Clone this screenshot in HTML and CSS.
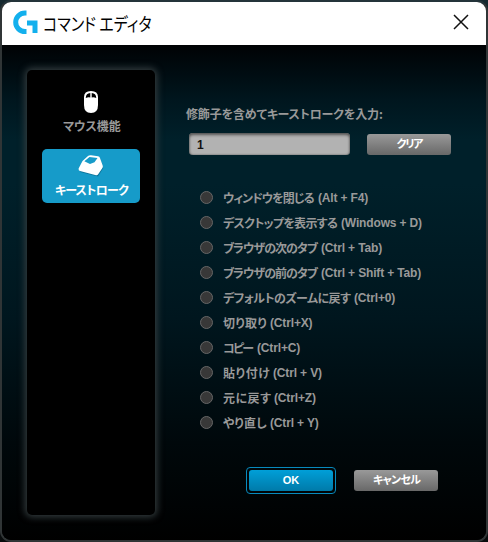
FILE: index.html
```html
<!DOCTYPE html>
<html lang="ja">
<head>
<meta charset="utf-8">
<title>コマンド エディタ</title>
<link rel="stylesheet" href="styles.css">
</head>
<body>
<div class="window">
  <header class="titlebar">
    <svg class="logo" width="25" height="25" viewBox="0 0 25 25"><path d="M13.500 3H12a9.300 9.300 0 0 0 0 18.600h1.500" fill="none" stroke="#13b0ed" stroke-width="5"/><path d="M14 10.500h10.500V23h-5v-7.500H14z" fill="#13b0ed"/></svg>
    <h1>コマンド エディタ</h1>
    <svg class="close" width="16" height="16" viewBox="0 0 16 16"><path d="M1 1l14 14M15 1L1 15" stroke="#111" stroke-width="1.5"/></svg>
  </header>
  <main class="body">
    <nav class="sidebar">
      <div class="tab">
        <svg width="16" height="24" viewBox="0 0 16 24"><path d="M1 7Q1 1 8 1t7 6v8q0 8-7 8t-7-8z" fill="#fff"/><path d="M2.800 7.500Q3 3.300 7.300 2.900V7.500Q5 7 2.800 8zM8.700 2.900q4.300.4 4.500 4.600v.5Q11 7 8.700 7.500z" fill="#000"/></svg>
        <span class="jp" style="width:56px">マウス機能</span>
      </div>
      <div class="tab active">
        <svg width="26" height="22" viewBox="0 0 26 22"><path d="M8 3L22 3l3.300 10-5.300 8.500L2 17z" fill="#075a7c" opacity=".6"/><path d="M4.500 6L10 1Q11 0 13 .2L20 1.300Q21.500 1.500 22 3l2.700 7.500q.5 1.500-.3 2.500L20 19.500q-.6 1-2 .7L2 16Q.3 15.500.6 13.500z" fill="#fff"/><path d="M6.300 6.300L11.500 2 19.500 3 16.500 7.200 12 9z" fill="#169bc9"/></svg>
        <span class="jp" style="width:72px">キーストローク</span>
      </div>
    </nav>
    <section class="content">
      <label class="prompt"><span class="jp" style="width:195px">修飾子を含めてキーストロークを入力:</span></label>
      <div class="entry"><div class="input">1</div><button><span class="jp" style="width:25px">クリア</span></button></div>
      <ul class="options">
        <li><i></i><span class="jp" style="width:90px">ウィンドウを閉じる</span><span>(Alt + F4)</span></li>
        <li><i></i><span class="jp" style="width:113px">デスクトップを表示する</span><span>(Windows + D)</span></li>
        <li><i></i><span class="jp" style="width:93px">ブラウザの次のタブ</span><span>(Ctrl + Tab)</span></li>
        <li><i></i><span class="jp" style="width:93px">ブラウザの前のタブ</span><span>(Ctrl + Shift + Tab)</span></li>
        <li><i></i><span class="jp" style="width:126px">デフォルトのズームに戻す</span><span>(Ctrl+0)</span></li>
        <li><i></i><span class="jp" style="width:42px">切り取り</span><span>(Ctrl+X)</span></li>
        <li><i></i><span class="jp" style="width:29px">コピー</span><span>(Ctrl+C)</span></li>
        <li><i></i><span class="jp" style="width:45px">貼り付け</span><span>(Ctrl + V)</span></li>
        <li><i></i><span class="jp" style="width:46px">元に戻す</span><span>(Ctrl+Z)</span></li>
        <li><i></i><span class="jp" style="width:42px">やり直し</span><span>(Ctrl + Y)</span></li>
      </ul>
      <div class="actions"><div class="focus"><button class="primary">OK</button></div><button><span class="jp" style="width:46px">キャンセル</span></button></div>
    </section>
  </main>
</div>
</body>
</html>
```
FILE: styles.css
```css
* { box-sizing: border-box; }
body {
  margin: 0;
  width: 488px;
  height: 542px;
  overflow: hidden;
  background: linear-gradient(#15282f, #303637 50%, #080b0c);
  font: bold 12px/16px "Liberation Sans", "Noto Sans CJK JP", sans-serif;
  color: #999;
}
.window {
  width: 488px;
  height: 542px;
  border: 2px solid #303536;
  border-top-color: #24343a;
  border-radius: 11px;
  overflow: hidden;
  background: #000;
}
.titlebar {
  display: flex;
  align-items: center;
  height: 43px;
  padding: 0 17px 2px 11px;
  background: #fff;
}
.logo { flex: none; }
.close { margin-top: -1px; }
h1 {
  flex: 1;
  margin: 0 0 0 5px;
  font: 400 18px/24px "Noto Sans CJK JP", sans-serif;
  font-feature-settings: "palt";
  color: #000;
  transform: scaleX(.835);
  transform-origin: left;
  white-space: nowrap;
}
.body {
  display: flex;
  height: 497px;
  padding: 25px 0 0 25px;
  background: linear-gradient(#000204, #00161e 11%, #00202a 19%, #00202a 28%, #00161e 55%, #00080b 80%, #000);
}
.sidebar {
  flex: none;
  display: flex;
  flex-direction: column;
  gap: 9px;
  width: 128px;
  height: 445px;
  padding: 16px 15px;
  border-radius: 5px;
  background: #000;
  box-shadow: 0 0 7px 2px #343d3f;
}
.tab {
  display: flex;
  flex-direction: column;
  align-items: center;
  height: 54px;
  padding-top: 4px;
  border-radius: 5px;
}
.tab .jp { margin-top: 4px; }
.tab.active { padding-top: 6px; background: #169bc9; color: #fff; }
.tab.active .jp { margin-top: 5px; }
.jp {
  display: block;
  flex: none;
  height: 16px;
  font: 700 12px/16px "Noto Sans CJK JP", sans-serif;
  font-feature-settings: "palt";
  letter-spacing: -1.8px;
  text-align: justify;
  text-align-last: justify;
  white-space: nowrap;
}
.content { width: 300px; padding: 36px 0 0 30px; }
.prompt { display: block; padding-left: 1px; }
.entry { display: flex; gap: 17px; margin: 11px 0 0 4px; }
.input {
  width: 161px;
  height: 22px;
  padding: 4px 8px;
  border-radius: 4px;
  background: #b2b2b2;
  color: #111;
  box-shadow: inset 0 2px 3px #555, inset 0 0 2px #555;
}
button {
  display: flex;
  align-items: center;
  justify-content: center;
  width: 84px;
  height: 21px;
  margin: 1px 0 0;
  padding: 0 0 1px;
  border: 0;
  border-radius: 3px;
  background: linear-gradient(#999, #686868);
  color: #fff;
  font: bold 11px/16px "Liberation Sans", sans-serif;
}
button .jp { font-size: 11px; letter-spacing: -2px; margin-top: -2px; }
.options { margin: 30px 0 0 15px; padding: 0; list-style: none; }
.options li { display: flex; align-items: center; height: 25px; white-space: nowrap; letter-spacing: -.15px; }
.options i {
  width: 13px;
  height: 13px;
  margin: 0 10px 0 0;
  border: 1px solid #666;
  border-radius: 50%;
  background: #383838;
}
.options .jp { margin-right: 5px; }
.actions { display: flex; gap: 18px; margin: 32px 0 0 61px; }
.focus {
  width: 90px;
  height: 27px;
  padding: 2px;
  border: 1px solid #078abd;
  border-radius: 4px;
}
.focus button { margin: 0; }
.primary { background: linear-gradient(#009fd8, #007aa9); }
.actions > button { margin-top: 3px; }
```
